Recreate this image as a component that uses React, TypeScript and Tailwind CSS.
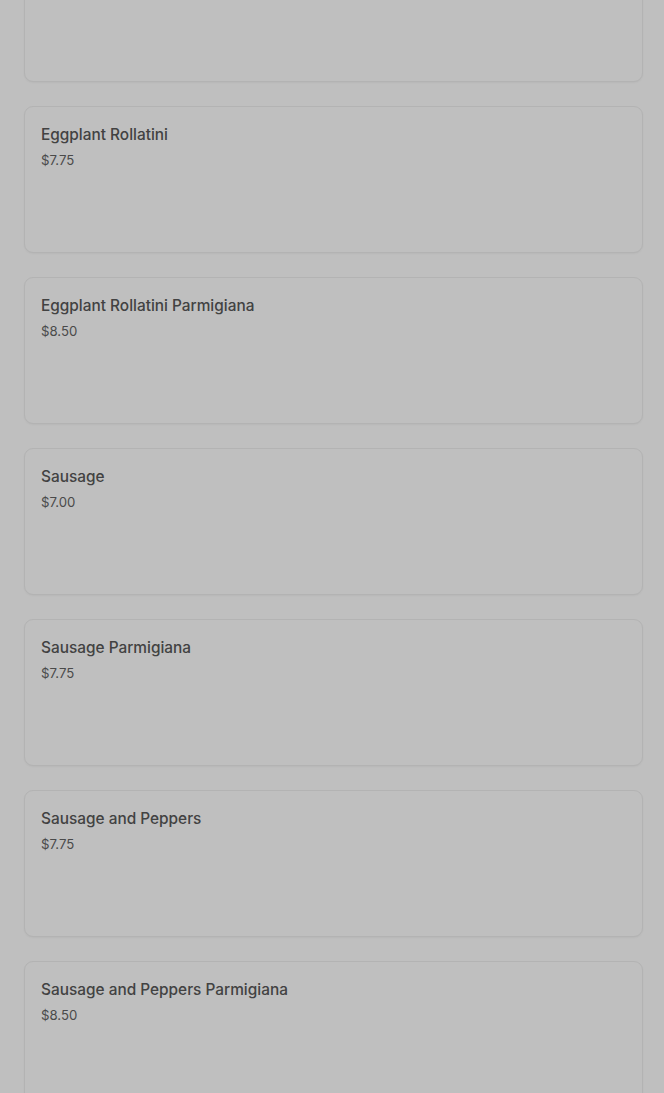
const items = [
  { name: "", price: "" },
  { name: "Eggplant Rollatini", price: "$7.75" },
  { name: "Eggplant Rollatini Parmigiana", price: "$8.50" },
  { name: "Sausage", price: "$7.00" },
  { name: "Sausage Parmigiana", price: "$7.75" },
  { name: "Sausage and Peppers", price: "$7.75" },
  { name: "Sausage and Peppers Parmigiana", price: "$8.50" },
]

const App = () => {
  return (
    <div
      className="h-[1093px] overflow-hidden bg-[#bfbfbf]"
      style={{ fontFamily: "Inter, 'Noto Sans', sans-serif" }}
    >
      <div className="-mt-[65px] flex flex-col gap-6 px-6 pr-[21px]">
        {items.map((item, i) => (
          <div
            key={i}
            className="h-[147px] rounded-[9px] border border-[#b3b3b3] bg-[#bfbfbf] px-4 pt-[17px] pb-4 shadow-[0_1px_2px_rgba(0,0,0,0.04)]"
          >
            {item.name && (
              <>
                <h3 className="text-[15.4px] leading-[22px] font-medium text-[#424242]">
                  {item.name}
                </h3>
                <p className="mt-[4px] text-[13.2px] leading-5 text-[#4a4a4a]">
                  {item.price}
                </p>
              </>
            )}
          </div>
        ))}
      </div>
    </div>
  )
}

export default App
